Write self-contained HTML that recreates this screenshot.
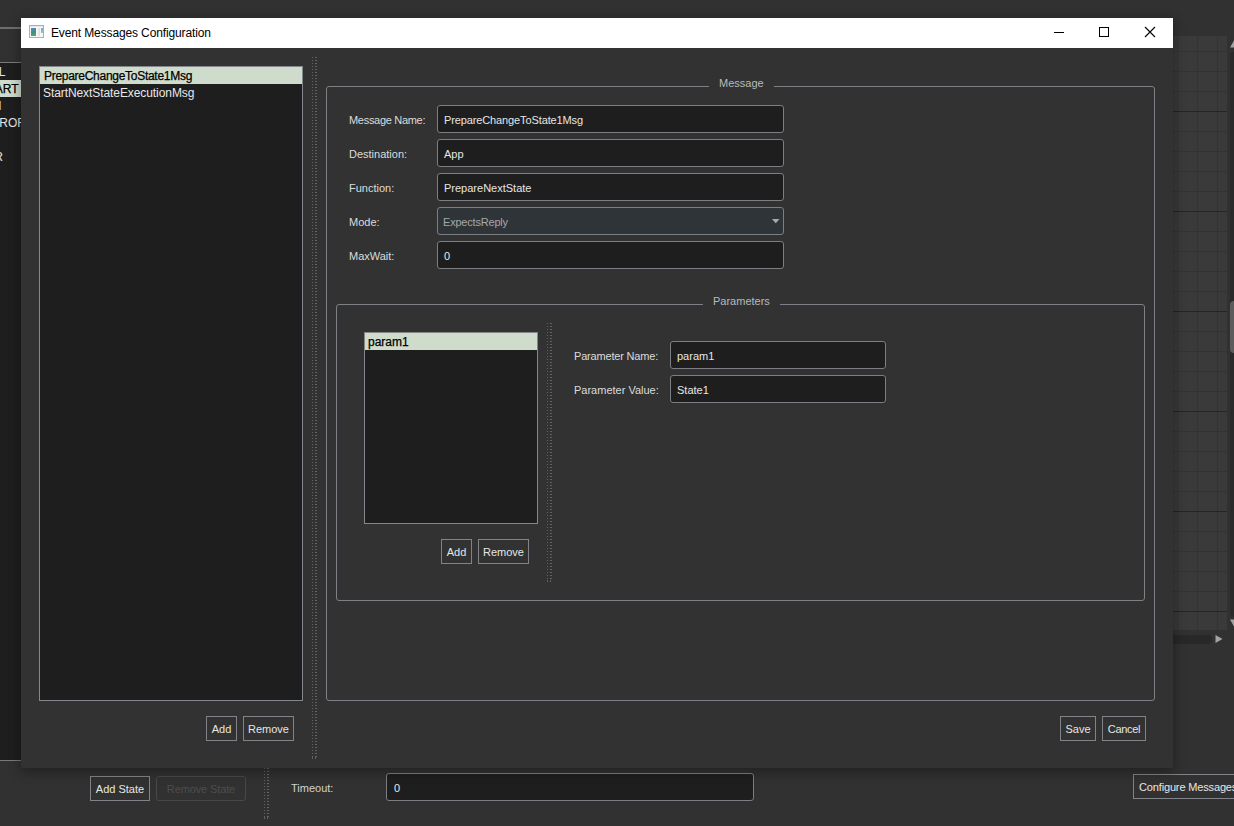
<!DOCTYPE html>
<html><head><meta charset="utf-8">
<style>
*{box-sizing:border-box;margin:0;padding:0}
html,body{width:1234px;height:826px;overflow:hidden;background:#333333;font-family:"Liberation Sans",sans-serif;font-size:11px;color:#dcdcdc}
.a{position:absolute}
.t{position:absolute;white-space:nowrap;line-height:14px}
.inp{position:absolute;background:#1e1e1e;border:1px solid #7b7e82;border-radius:3px}
.btn{position:absolute;border:1px solid #808387;color:#e6e6e6;text-align:center;line-height:25px;white-space:nowrap}
.list{position:absolute;background:#1e1e1e;border:1px solid #84878b}
.sel{position:absolute;background:#cfdbcb;color:#1a1a1a}
.grp{position:absolute;border:1px solid #7d8084;border-radius:3px}
.gt{position:absolute;background:#323232;color:#b9b9b9;padding:0 10px;line-height:14px;white-space:nowrap}
.dots{position:absolute;width:5px;background-image:linear-gradient(#626262 1px,transparent 1px);background-size:1px 3px;background-repeat:repeat-y}
</style></head><body>

<!-- background application -->
<div class="a" style="left:0;top:0;width:1234px;height:826px;background:#313131"></div>
<div class="a" style="left:0;top:27px;width:21px;height:2px;background:#6c6f72"></div>
<div class="list" style="left:-2px;top:62px;width:23px;height:699px;border-width:1px 0 1px 0;border-color:#7a7a7a"></div>
<div class="a" style="left:0;top:63px;width:21px;height:200px;overflow:hidden">
<div class="a" style="left:0;top:17px;width:21px;height:17px;background:#cfdbcb"></div>
<div class="t" style="right:15.5px;top:2px;font-size:12px;color:#e6e6e6">INITIAL</div>
<div class="t" style="right:2.4px;top:19px;font-size:12px;color:#000;-webkit-text-stroke:0.25px #000">START</div>
<div class="t" style="right:19.5px;top:36px;font-size:12px;color:#e6e6e6">RUN</div>
<div class="t" style="right:-5px;top:53px;font-size:12px;color:#e6e6e6">ERROR</div>
<div class="t" style="right:18px;top:87px;font-size:12px;color:#e6e6e6">USER</div>
</div>

<!-- grid area -->
<div class="a" id="grid" style="left:1173px;top:36px;width:54px;height:594px;background-color:#3a3a3a;
background-image:linear-gradient(to bottom,transparent 75px,#252525 75px,#252525 76px,transparent 76px),linear-gradient(to bottom,transparent 15px,#333333 15px,#333333 16px,transparent 16px),linear-gradient(to right,transparent 4px,#333333 4px,#333333 5px,transparent 5px);
background-size:100% 100px,100% 20px,20px 100%"></div>
<!-- v scrollbar -->
<svg class="a" style="left:1229px;top:39px" width="10" height="9" viewBox="0 0 10 9"><path d="M1 8.5L5 1.5L9 8.5Z" fill="#a3a3a3"/></svg>
<div class="a" style="left:1230px;top:52px;width:8px;height:565px;background:#2a2a2a;border-radius:4px"></div>
<div class="a" style="left:1230px;top:301px;width:8px;height:52px;background:#5c5c5c;border-radius:4px"></div>
<svg class="a" style="left:1229px;top:619px" width="10" height="9" viewBox="0 0 10 9"><path d="M1 0.5L5 7.5L9 0.5Z" fill="#a3a3a3"/></svg>
<!-- h scrollbar -->
<div class="a" style="left:1160px;top:635px;width:52px;height:9px;background:#282828;border-radius:4.5px"></div>
<svg class="a" style="left:1214px;top:634px" width="10" height="11" viewBox="0 0 10 11"><path d="M1.5 1L8.5 5L1.5 9Z" fill="#a3a3a3"/></svg>
<!-- bottom bar of app -->
<div class="btn" style="left:90px;top:776px;width:60px;height:25px">Add State</div>
<div class="btn" style="left:156px;top:776px;width:90px;height:25px;border-color:#474849;color:#4d4d4d;border-radius:3px;letter-spacing:-0.12px">Remove State</div>
<div class="dots" style="left:264px;top:768px;width:1px;height:46px"></div>
<div class="dots" style="left:267px;top:768px;width:2px;height:46px;background-size:2px 3px"></div>
<div class="a" style="left:264px;top:816px;width:1px;height:3px;background:#626262"></div>
<div class="a" style="left:267px;top:816px;width:2px;height:1px;background:#626262"></div>
<div class="a" style="left:267px;top:817px;width:1px;height:2px;background:#626262"></div>
<div class="t" style="left:291px;top:781px;color:#d2d2d2">Timeout:</div>
<div class="inp" style="left:386px;top:773px;width:368px;height:28px"></div>
<div class="t" style="left:394px;top:781px;color:#e6e6e6">0</div>
<div class="btn" style="left:1133px;top:774px;width:120px;height:25px;text-align:left;padding-left:5px;letter-spacing:-0.15px">Configure Messages</div>

<!-- dialog shadow -->
<div class="a" style="left:21px;top:18px;width:1152px;height:750px;box-shadow:0 3px 11px 1px rgba(0,0,0,0.33)"></div>
<!-- dialog -->
<div class="a" id="dlg" style="left:21px;top:18px;width:1152px;height:750px;background:#323232;overflow:hidden">
</div>


<!-- title bar -->
<div class="a" style="left:21px;top:18px;width:1152px;height:30px;background:#ffffff"></div>
<div class="a" style="left:29px;top:25px;width:15px;height:13px;border:1px solid #abaeb2;background:#f6f6f6"></div>
<div class="a" style="left:30px;top:26px;width:13px;height:1px;background:#e4e6e9"></div>
<div class="a" style="left:31px;top:28px;width:5px;height:8px;background:linear-gradient(160deg,#5d86c2,#3f8f86 50%,#52ad5e)"></div>
<div class="a" style="left:38px;top:28px;width:2px;height:8px;background:#e2e2e2"></div>
<div class="a" style="left:41px;top:28px;width:2px;height:5px;background:linear-gradient(#7ea2d0,#8fd08f)"></div>
<div class="t" style="left:51px;top:26px;font-size:12px;letter-spacing:-0.13px;color:#000">Event Messages Configuration</div>
<div class="a" style="left:1054px;top:32px;width:10px;height:1px;background:#000"></div>
<div class="a" style="left:1099px;top:27px;width:10px;height:10px;border:1px solid #000"></div>
<svg class="a" style="left:1144px;top:26px" width="12" height="12" viewBox="0 0 12 12"><path d="M1 1L11 11M11 1L1 11" stroke="#000" stroke-width="1.1" fill="none"/></svg>

<!-- main list -->
<div class="list" style="left:39px;top:66px;width:264px;height:635px"></div>
<div class="sel" style="left:40px;top:67px;width:262px;height:17px"></div>
<div class="t" style="left:44px;top:69px;font-size:12px;letter-spacing:-0.28px;color:#000;-webkit-text-stroke:0.25px #000">PrepareChangeToState1Msg</div>
<div class="t" style="left:43px;top:86px;font-size:12px;letter-spacing:-0.08px;color:#e8e8e8">StartNextStateExecutionMsg</div>
<div class="btn" style="left:206px;top:716px;width:31px;height:25px">Add</div>
<div class="btn" style="left:243px;top:716px;width:51px;height:25px">Remove</div>

<!-- main splitter -->
<div class="dots" style="left:312px;top:57px;width:1px;height:699px"></div>
<div class="dots" style="left:315px;top:57px;width:2px;height:699px;background-size:2px 3px"></div>
<div class="a" style="left:312px;top:756px;width:1px;height:3px;background:#626262"></div>
<div class="a" style="left:315px;top:756px;width:2px;height:1px;background:#626262"></div>
<div class="a" style="left:315px;top:757px;width:1px;height:2px;background:#626262"></div>

<!-- message group -->
<div class="grp" style="left:326px;top:86px;width:829px;height:615px"></div>
<div class="gt" style="left:709px;top:76px">Message</div>

<div class="t" style="left:349px;top:113px;letter-spacing:-0.3px">Message Name:</div>
<div class="t" style="left:349px;top:147px">Destination:</div>
<div class="t" style="left:349px;top:181px">Function:</div>
<div class="t" style="left:349px;top:215px">Mode:</div>
<div class="t" style="left:349px;top:249px">MaxWait:</div>

<div class="inp" style="left:437px;top:105px;width:347px;height:28px"></div>
<div class="t" style="left:444px;top:113px;letter-spacing:-0.12px;color:#e6e6e6">PrepareChangeToState1Msg</div>
<div class="inp" style="left:437px;top:139px;width:347px;height:28px"></div>
<div class="t" style="left:444px;top:147px;color:#e6e6e6">App</div>
<div class="inp" style="left:437px;top:173px;width:347px;height:28px"></div>
<div class="t" style="left:444px;top:181px;color:#e6e6e6">PrepareNextState</div>
<div class="inp" style="left:437px;top:207px;width:347px;height:28px;background:#2f3438"></div>
<div class="t" style="left:443px;top:215px;letter-spacing:-0.2px;color:#a8a8a8">ExpectsReply</div>
<svg class="a" style="left:772px;top:219px" width="9" height="5" viewBox="0 0 9 5"><path d="M0 0H7.5L3.75 4.3Z" fill="#a9a9a9"/></svg>
<div class="inp" style="left:437px;top:241px;width:347px;height:28px"></div>
<div class="t" style="left:444px;top:249px;color:#e6e6e6">0</div>

<!-- parameters group -->
<div class="grp" style="left:336px;top:304px;width:809px;height:297px"></div>
<div class="gt" style="left:703px;top:294px">Parameters</div>
<div class="list" style="left:364px;top:332px;width:174px;height:192px"></div>
<div class="sel" style="left:365px;top:333px;width:172px;height:17px"></div>
<div class="t" style="left:368px;top:335px;font-size:12px;color:#000;-webkit-text-stroke:0.25px #000">param1</div>
<div class="btn" style="left:441px;top:539px;width:31px;height:25px">Add</div>
<div class="btn" style="left:478px;top:539px;width:51px;height:25px">Remove</div>
<div class="dots" style="left:547px;top:323px;width:1px;height:256px"></div>
<div class="dots" style="left:550px;top:323px;width:2px;height:256px;background-size:2px 3px"></div>
<div class="a" style="left:547px;top:580px;width:1px;height:2px;background:#626262"></div>
<div class="a" style="left:550px;top:580px;width:1px;height:2px;background:#626262"></div>

<div class="t" style="left:574px;top:349px;letter-spacing:-0.18px">Parameter Name:</div>
<div class="t" style="left:574px;top:383px">Parameter Value:</div>
<div class="inp" style="left:670px;top:341px;width:216px;height:28px"></div>
<div class="t" style="left:677px;top:349px;color:#e6e6e6">param1</div>
<div class="inp" style="left:670px;top:375px;width:216px;height:28px"></div>
<div class="t" style="left:677px;top:383px;color:#e6e6e6">State1</div>

<!-- dialog buttons -->
<div class="btn" style="left:1060px;top:716px;width:36px;height:25px">Save</div>
<div class="btn" style="left:1102px;top:716px;width:44px;height:25px;letter-spacing:-0.3px">Cancel</div>

</body></html>
